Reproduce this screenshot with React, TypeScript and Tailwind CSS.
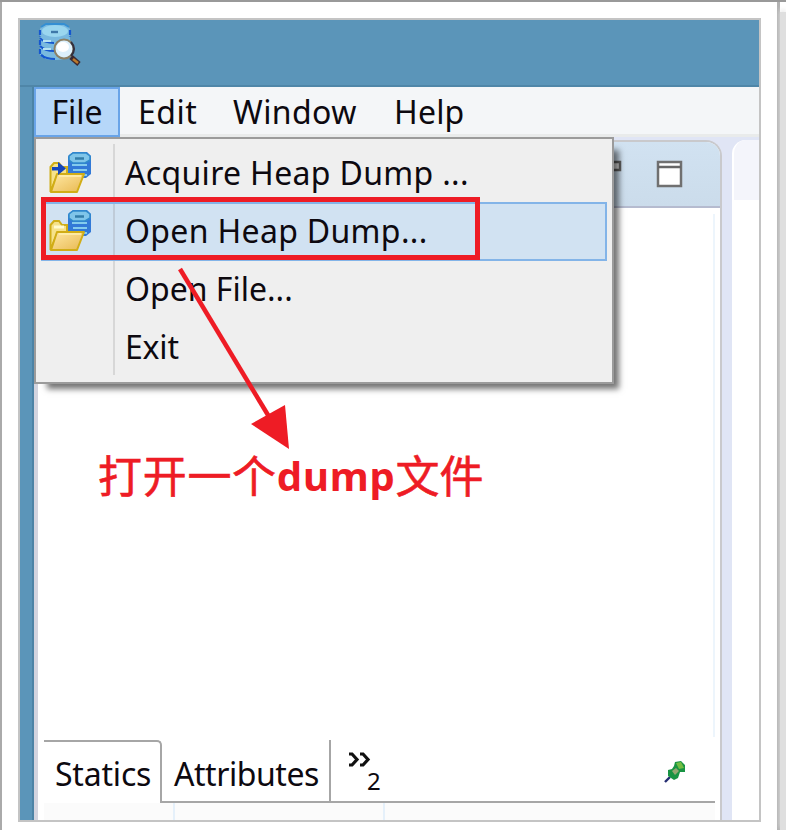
import type { ReactNode } from 'react';

function SearchDatabaseIcon() {
  return (
    <svg width="44" height="44" viewBox="0 0 44 44" className="block">
      <path d="M3 6Q4 1 18 1Q32 1 33 6V32Q30 37 18 37Q5 37 3 32Z" fill="#79b9df" />
      <path d="M3 7V14M3 17V23M3 26V31L8 35M33 7V14" stroke="#1557cf" strokeWidth="2.2" fill="none" strokeDasharray="5 1.5" />
      <ellipse cx="18" cy="8" rx="13" ry="6" fill="#9ad6ef" />
      <path d="M4 4L9 1H27L32 4" stroke="#348fd3" strokeWidth="1.8" fill="none" />
      <path d="M14 9H21" stroke="#3e78a9" strokeWidth="2.4" />
      <path d="M3 15Q7 20 17 20M3 23Q8 28 17 28M4 32Q9 36 18 36" stroke="#1557cf" strokeWidth="2" fill="none" />
      <path d="M6 18H14M6 26H14" stroke="#b6e1f2" strokeWidth="2" />
      <path d="M34 34L42 41" stroke="#3b2930" strokeWidth="5" />
      <path d="M36 36L41 40" stroke="#bd7a2c" strokeWidth="2.4" />
      <circle cx="27" cy="26" r="9.5" fill="#dcf0fc" stroke="#8b8066" strokeWidth="2" />
      <path d="M34 19Q40 26 34 33" stroke="#332f3d" strokeWidth="2" fill="none" />
      <ellipse cx="26" cy="24" rx="6" ry="5" fill="#fff" />
    </svg>
  );
}

function HeapFolderIcon({ acquire = false }: { acquire?: boolean }) {
  return (
    <svg width="44" height="44" viewBox="0 0 44 44" className="block">
      <path d="M20 4L24 1H38L42 5V23L37 27H22L19 23V6Z" fill="#3279d7" />
      <path d="M20 5L24 2H37L41 5V9L36 12H24L20 9Z" fill="#7fc5e9" stroke="#308bcb" strokeWidth="1.5" />
      <path d="M26 7.5H35" stroke="#327da9" strokeWidth="2.5" />
      <path d="M23 14H38M24 19H38M25 24H38" stroke="#83cbed" strokeWidth="2" />
      <path d="M1.5 41V16L5 12H10L13 16H18V24L8 25Z" fill="#f6e28a" stroke="#d0ae18" strokeWidth="2" />
      <path d="M5 18H15" stroke="#fffbd1" strokeWidth="3" />
      <path d="M8 23H35L28 41H2Z" fill="url(#folder-face)" stroke="#d1ad16" strokeWidth="2" strokeLinejoin="round" />
      <path d="M10 25H32" stroke="#fff1b1" strokeWidth="1.5" />
      {acquire && <path d="M3 16H9V11L17 17.5L9 24V19.5H3Z" fill="#1446bd" />}
      <defs>
        <linearGradient id="folder-face" x1="0" y1="0" x2="1" y2="1">
          <stop stopColor="#ffe9a5" /><stop offset="1" stopColor="#e8b850" />
        </linearGradient>
      </defs>
    </svg>
  );
}

function MenuRow({ children, icon }: { children: ReactNode; icon?: ReactNode }) {
  return (
    <div className="flex h-[58px] items-center">
      <div className="w-[89px] pl-[13px]">{icon}</div>
      {children}
    </div>
  );
}

export default function App() {
  return (
    <div className="relative flex h-[830px] w-[786px] overflow-hidden border-t-2 border-[#999] bg-white text-[32px] leading-none text-[#0d090f] [font-family:'Noto_Sans','Noto_Sans_CJK_SC',sans-serif]">
      <div className="h-full w-[780px] shrink-0 border-r-[3px] border-l-2 border-r-[#b2b2b2] border-l-[#aaa] pt-4 pl-4">
        <div className="flex h-[804px] w-[743px] flex-col border-2 border-[#c4c4c4] bg-[#5b95b9]">
          <header className="h-[67px] border-b-2 border-[#4f86a8] pt-[3px] pl-[17px]"><SearchDatabaseIcon /></header>
          <div className="flex min-h-0 flex-1">
            <div className="w-[14px] shrink-0 border-r-2 border-[#4c83a6]" />
            <div className="flex min-w-0 flex-1 flex-col bg-[#e0e5f5]">
              <nav className="flex h-[50px] shrink-0 items-center border-b-[3px] border-[#e9ebeb] bg-[#f4f6f8] pt-[2px]">
                <div className="-mt-[2px] flex h-[50px] w-[86px] items-center justify-center self-start border-2 border-[#69a4e8] bg-[#b6d7f9]"><span>File</span></div>
                <span className="ml-[18px] w-[95px] tracking-[0.5px]">Edit</span>
                <span className="w-[161px] tracking-[0.4px]">Window</span>
                <span className="tracking-[0.2px]">Help</span>
              </nav>
              <div className="flex min-h-0 flex-1 pt-[3px]">
                <section className="flex w-[688px] shrink-0 flex-col overflow-hidden rounded-tr-[16px] border-t-2 border-r-2 border-l-4 border-[#c9c9cc] border-l-[#d3d4df] bg-white">
                  <div className="flex h-[66px] shrink-0 items-start justify-end border-b-2 border-[#b5bbcf] bg-gradient-to-b from-[#d1e2f1] to-[#cbdceb] pt-[18px] pr-[37px]">
                    <svg width="84" height="28" viewBox="0 0 84 28">
                      <path d="M2 2H21V10H2Z" fill="#ddd" stroke="#606060" strokeWidth="2.5" />
                      <path d="M59 2H82V26H59Z" fill="#fff" stroke="#707070" strokeWidth="2.5" />
                      <path d="M59 7H82" stroke="#666" strokeWidth="2.5" />
                    </svg>
                  </div>
                  <div className="mt-[6px] mr-[5px] flex-1 border-r-2 border-[#edf5fc]" />
                  <div className="mr-[5px] ml-[6px] flex h-[66px] shrink-0 flex-col pt-[3px]">
                    <div className="flex h-[63px]">
                      <div className="flex w-[118px] items-center rounded-tr-[5px] border-t-2 border-r-2 border-[#a6a6a6] pt-[2px] pl-[11px]"><span className="tracking-[-0.2px]">Statics</span></div>
                      <div className="flex flex-1 border-b-2 border-[#a6a6a6]">
                        <div className="flex w-[169px] items-center border-r-2 border-[#a6a6a6] pt-[6px] pl-[12px]"><span className="tracking-[-0.45px]">Attributes</span></div>
                        <div className="flex flex-1 pt-[12px] pl-[16px]">
                          <svg width="24" height="16" viewBox="0 0 24 16"><path d="M2 2H5L10 7.5L5 13H2M13 2H16L21 7.5L16 13H13" fill="none" stroke="#111" strokeWidth="3.2" /></svg>
                          <span className="-ml-[4px] pt-[17px] text-[24px]">2</span>
                        </div>
                        <svg className="mt-[20px] mr-[28px]" width="24" height="24" viewBox="0 0 24 24">
                          <path d="M2 22L7 17" stroke="#252e72" strokeWidth="2.4" />
                          <path d="M5 10L9 9L11 6L12 2L18 1L22 5V12L17 12L15 18L11 20L5 16Z" fill="#199443" />
                          <path d="M13 3L18 2L21 8L16 9Z" fill="#72bd42" />
                          <path d="M9 11L13 8L16 11L12 15Z" fill="#94a872" />
                        </svg>
                      </div>
                    </div>
                  </div>
                  <div className="mr-[5px] ml-[6px] flex h-[17px] shrink-0 bg-[#fbfbfb]">
                    <div className="w-[131px] border-r-2 border-[#e5f0fa]" /><div className="w-[210px] border-r-2 border-[#e5f0fa]" />
                  </div>
                </section>
                <section className="ml-[10px] flex-1 overflow-hidden rounded-tl-[14px] border-l-2 border-white bg-white"><div className="h-[60px] bg-[#f4f5fb]" /></section>
              </div>
            </div>
          </div>
        </div>
      </div>
      <div className="mt-[10px] w-[6px] bg-[#dfdfdf] shadow-[0_-2px_5px_#e8e8e8]" />

      <div className="absolute top-[135px] left-[34px] h-[247px] w-[580px] border-2 border-[#9b9b9b] bg-[#efefef] pt-[5px] shadow-[9px_9px_6px_-4px_rgba(0,0,0,.55)]">
        <div className="absolute top-[5px] left-[77px] h-[231px] w-[2px] bg-[#d7d7d7]" />
        <div className="absolute top-[63px] left-[5px] h-[59px] w-[566px] border-2 border-[#83b4e8] bg-[#d1e2f2]"><div className="ml-[70px] h-full w-[2px] bg-[#bfcbd8]" /></div>
        <div className="relative tracking-[0.33px]">
          <MenuRow icon={<HeapFolderIcon acquire />}><span>Acquire Heap Dump ...</span></MenuRow>
          <MenuRow icon={<HeapFolderIcon />}><span>Open Heap Dump...</span></MenuRow>
          <MenuRow><span className="tracking-[0px]">Open File...</span></MenuRow>
          <MenuRow><span className="tracking-[-0.2px]">Exit</span></MenuRow>
        </div>
      </div>
      <div className="absolute top-[195px] left-[41px] h-[63px] w-[439px] border-[5px] border-[#ee1c25]" />
      <svg className="absolute top-[264px] left-[174px]" width="120" height="186" viewBox="174 266 120 186">
        <path d="M180 269L271 420" stroke="#ee1c25" strokeWidth="4.5" />
        <path d="M251 424L285 405L289 449Z" fill="#ee1c25" />
      </svg>
      <div className="absolute top-[452px] left-[98px] flex items-center text-[44px] whitespace-nowrap text-[#ee1c25]">
        <span className="tracking-[0.7px] [-webkit-text-stroke:0.6px_#ee1c25]">打开一个</span><span className="text-[40px] font-bold tracking-[0.8px]">dump</span><span className="[-webkit-text-stroke:0.6px_#ee1c25]">文件</span>
      </div>
    </div>
  );
}
